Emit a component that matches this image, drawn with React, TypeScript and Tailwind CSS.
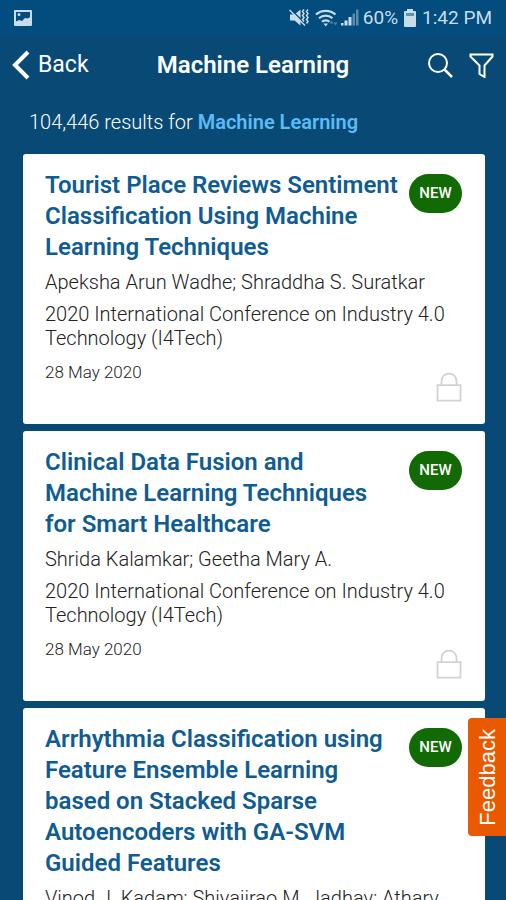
type Paper = {
  title: string;
  authors: string;
  venue: string;
  date: string;
};

const papers: Paper[] = [
  {
    title: 'Tourist Place Reviews Sentiment Classification Using Machine Learning Techniques',
    authors: 'Apeksha Arun Wadhe; Shraddha S. Suratkar',
    venue: '2020 International Conference on Industry 4.0 Technology (I4Tech)',
    date: '28 May 2020',
  },
  {
    title: 'Clinical Data Fusion and Machine Learning Techniques for Smart Healthcare',
    authors: 'Shrida Kalamkar; Geetha Mary A.',
    venue: '2020 International Conference on Industry 4.0 Technology (I4Tech)',
    date: '28 May 2020',
  },
  {
    title:
      'Arrhythmia Classification using Feature Ensemble Learning based on Stacked Sparse Autoencoders with GA-SVM Guided Features',
    authors: 'Vinod J. Kadam; Shivajirao M. Jadhav; Atharv',
    venue: '2020 International Conference on Industry 4.0 Technology (I4Tech)',
    date: '28 May 2020',
  },
];

function StatusBar() {
  return (
    <div className="flex h-9 shrink-0 items-center justify-between bg-[#024c7e] px-3.5 text-[#c9dcea]">
      <svg width="18" height="16" viewBox="0 0 18 16" aria-hidden="true">
        <path
          fill="currentColor"
          fillRule="evenodd"
          d="M1 0h16a1 1 0 0 1 1 1v14a1 1 0 0 1-1 1H1a1 1 0 0 1-1-1V1a1 1 0 0 1 1-1Zm1 2v9.500l3-1.500 3 1 3-3 3 .500 2-1.500V2H2Zm3 1a1.500 1.500 0 1 1 0 3 1.500 1.500 0 0 1 0-3Z"
        />
      </svg>
      <div className="flex items-center text-[19px] leading-6">
        <svg width="70" height="20" viewBox="0 0 70 20" aria-hidden="true" className="mr-1">
          <path d="M1 6.500h4.500l6-5v16l-6-5H1Z" fill="currentColor" />
          <path d="M1.500 1l15 15" stroke="#024c7e" strokeWidth="1.500" />
          <path d="M.500 2l15.500 15.500" stroke="currentColor" strokeWidth="1.500" />
          <path
            d="M15 1.500l-1.500 2 1.500 2-1.500 2 1.500 2-1.500 2 1.500 2M19 1.500l-1.500 2 1.500 2-1.500 2 1.500 2-1.500 2 1.500 2-1.500 2"
            fill="none"
            stroke="currentColor"
            strokeWidth="1.500"
          />
          <g fill="none" stroke="currentColor" strokeWidth="2.250">
            <path d="M27 6.500c5.500-5 14-5 19.500 0M30 10.250c4-3.500 9.500-3.500 13.500 0M33 13.750c2-2 5.500-2 7.500 0" />
          </g>
          <path d="M34.500 15.500h4.500l-2.250 3Z" fill="currentColor" />
          <path d="M40.500 15.500l2-3 2 3ZM44.500 14.500h4l-2 3Z" fill="currentColor" opacity=".4" />
          <path d="M52 15h2.500v2.500H52ZM55.500 12.500h3v5h-3ZM59.500 9h3v8.500h-3Z" fill="currentColor" />
          <path d="M63.500 5.500h2.500v12h-2.500ZM67 1.500h2.500v16H67Z" fill="currentColor" opacity=".45" />
        </svg>
        <span>60%</span>
        <svg width="12" height="18" viewBox="0 0 12 18" aria-hidden="true" className="mx-1.5">
          <path
            fill="currentColor"
            d="M3 0h6v2h2a1 1 0 0 1 1 1v14a1 1 0 0 1-1 1H1a1 1 0 0 1-1-1V3a1 1 0 0 1 1-1h2Z"
          />
          <path d="M2 4h8v3H2Z" fill="#5f91b2" />
        </svg>
        <span>1:42 PM</span>
      </div>
    </div>
  );
}

function Header() {
  return (
    <header className="grid h-[58px] shrink-0 grid-cols-[1fr_auto_1fr] items-center px-3 text-white">
      <button type="button" className="flex items-center gap-2 justify-self-start text-[23px]">
        <svg width="18" height="30" viewBox="0 0 18 30" aria-hidden="true">
          <path d="M16 2 3 15l13 13" fill="none" stroke="currentColor" strokeWidth="4" />
        </svg>
        Back
      </button>
      <h1 className="text-2xl font-semibold">Machine Learning</h1>
      <div className="flex items-center gap-4 justify-self-end">
        <button type="button" aria-label="Search">
          <svg width="25" height="25" viewBox="0 0 25 25" fill="none" stroke="currentColor" strokeWidth="2" aria-hidden="true">
            <circle cx="10" cy="10" r="9" />
            <path d="M16.500 16.500 24 24" strokeWidth="2.500" />
          </svg>
        </button>
        <button type="button" aria-label="Filter">
          <svg width="25" height="25" viewBox="0 0 25 25" fill="none" stroke="currentColor" strokeWidth="2" aria-hidden="true">
            <path d="M1.500 1.500h22v2l-8 9V24l-5-3v-8.500l-9-9Z" />
          </svg>
        </button>
      </div>
    </header>
  );
}

function Card({ paper }: { paper: Paper }) {
  return (
    <article className="shrink-0 rounded-[3px] bg-white pt-4 pr-[23px] pb-[22px] pl-[22px]">
      <div className="flex items-start justify-between">
        <h2 className="w-[356px] text-2xl leading-[31px] font-semibold text-[#0f5c92]">
          <a href="#paper">{paper.title}</a>
        </h2>
        <span className="mt-1 flex h-[39px] w-[53px] shrink-0 items-center justify-center rounded-[20px] bg-[#126a04] text-[15px] font-medium text-white">
          NEW
        </span>
      </div>
      <p className="mt-[7px] text-xl leading-6 font-light text-[#222222]">{paper.authors}</p>
      <p className="mt-2 text-xl leading-6 font-light text-[#222222]">{paper.venue}</p>
      <div className="mt-3 flex items-end justify-between">
        <p className="self-start text-[17px] leading-5 font-light text-[#222222]">{paper.date}</p>
        <svg width="26" height="30" viewBox="0 0 26 30" fill="none" stroke="#d2d2d2" strokeWidth="1.750" aria-hidden="true" className="mt-2.5">
          <path d="M1.500 13h23v15.500h-23ZM5.500 13V9a7.500 7.500 0 0 1 15 0v4" />
        </svg>
      </div>
    </article>
  );
}

export default function App() {
  return (
    <div className="relative flex h-screen flex-col overflow-hidden bg-[#084a75] font-['Roboto','Liberation_Sans',sans-serif]">
      <StatusBar />
      <Header />
      <p className="shrink-0 px-[29px] pt-3.5 pb-[18px] text-xl leading-7 font-light text-white">
        104,446 results for <strong className="font-semibold text-[#5bbcf5]">Machine Learning</strong>
      </p>
      <main className="flex min-h-0 flex-1 flex-col gap-[7px] overflow-y-auto pr-[21px] pl-[23px] [scrollbar-width:none]">
        {papers.map((paper) => (
          <Card key={paper.title} paper={paper} />
        ))}
      </main>
      <button
        type="button"
        className="absolute right-0 bottom-16 flex h-[118px] w-[38px] items-center justify-center rounded-l bg-[#e95a00] font-['Liberation_Sans',sans-serif] text-[22px] text-white"
      >
        <span className="rotate-180 [writing-mode:vertical-rl]">Feedback</span>
      </button>
    </div>
  );
}
